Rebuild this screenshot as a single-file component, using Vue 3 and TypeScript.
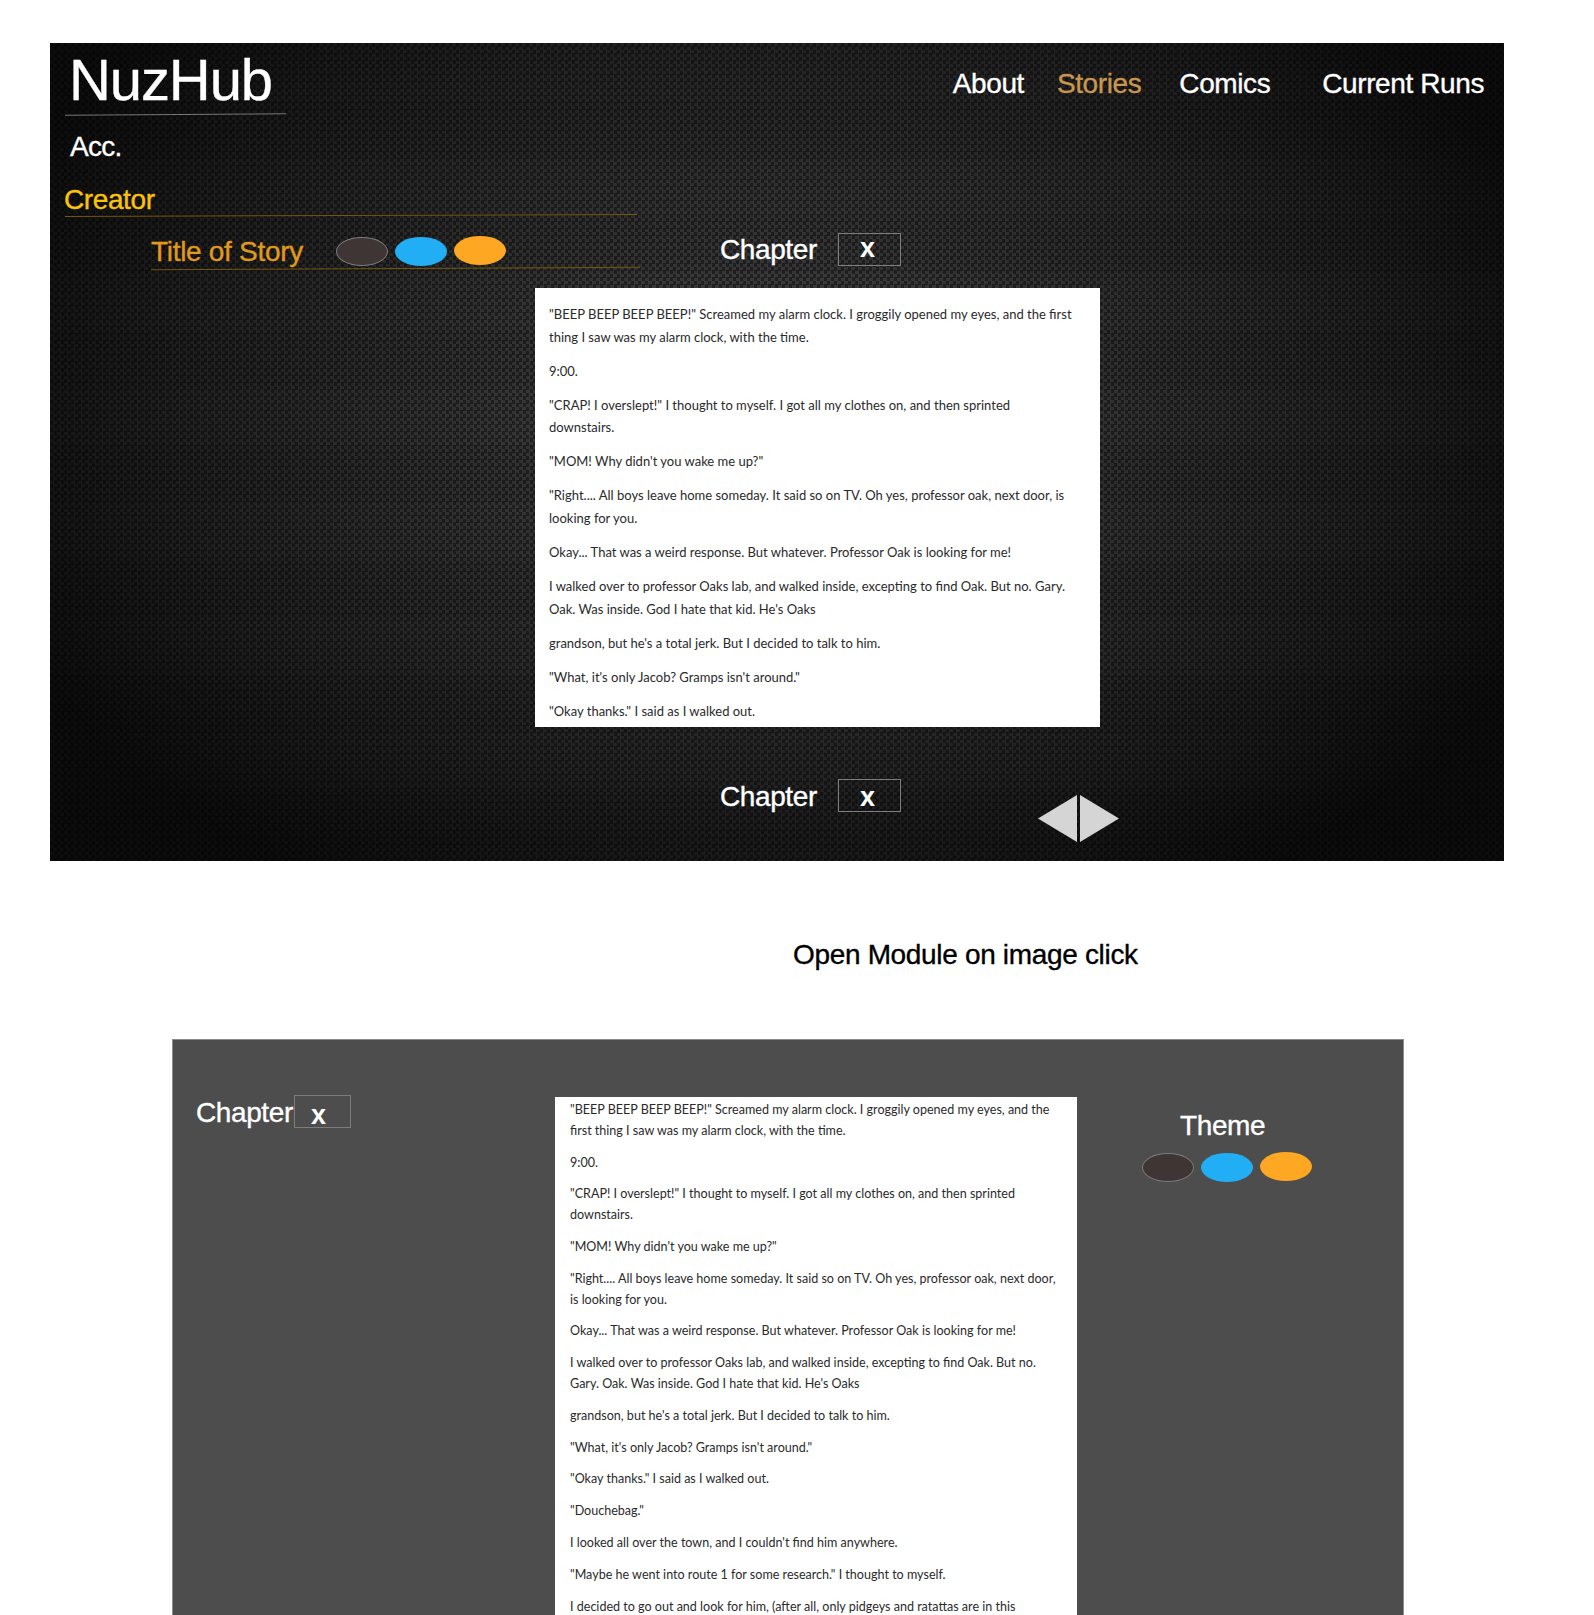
<template>
  <div class="page">
    <section class="hero">
      <div class="topbar">
        <div class="brand">
          <h1 class="logo">NuzHub</h1>
          <div class="brand-rule"></div>
        </div>
        <nav class="nav">
          <a v-for="link in links" :key="link.label" class="nav-link" :class="link.cls">{{ link.label }}</a>
        </nav>
      </div>
      <div class="acc">Acc.</div>
      <div class="creator">Creator</div>
      <div class="creator-rule"></div>

      <div class="story-row">
        <div class="story-col">
          <div class="story-head">
            <span class="story-title">Title of Story</span>
            <div class="swatches">
              <span v-for="s in swatches" :key="s" class="swatch" :class="s"></span>
            </div>
          </div>
          <div class="story-rule"></div>
        </div>
        <div class="chapter">
          <span class="chapter-label">Chapter</span>
          <span class="chapter-box">x</span>
        </div>
      </div>

      <article class="reader">
        <p v-for="(para, i) in story.slice(0, 10)" :key="i">{{ para }}</p>
      </article>

      <div class="bottom-row">
        <div class="chapter">
          <span class="chapter-label">Chapter</span>
          <span class="chapter-box low">x</span>
        </div>
        <div class="arrows">
          <svg width="39" height="47" viewBox="0 0 39 47"><polygon points="39,0 39,47 0,23.5" fill="#d5d5d5" /></svg>
          <svg width="39" height="47" viewBox="0 0 39 47"><polygon points="0,0 0,47 39,23.5" fill="#d5d5d5" /></svg>
        </div>
      </div>
    </section>

    <div class="note">Open Module on image click</div>

    <section class="module">
      <div class="module-left">
        <span class="chapter-label">Chapter</span>
        <span class="chapter-box small">x</span>
      </div>
      <article class="module-text">
        <p v-for="(para, i) in story" :key="i">{{ para }}</p>
      </article>
      <div class="module-right">
        <div class="theme">Theme</div>
        <div class="swatches">
          <span v-for="s in swatches" :key="s" class="swatch" :class="s"></span>
        </div>
      </div>
    </section>
  </div>
</template>

<script setup lang="ts">
const links = [
  { label: 'About', cls: '' },
  { label: 'Stories', cls: 'active' },
  { label: 'Comics', cls: 'comics' },
  { label: 'Current Runs', cls: 'last' }
]

const swatches = ['dark', 'blue', 'orange']

const story = [
  '"BEEP BEEP BEEP BEEP!" Screamed my alarm clock. I groggily opened my eyes, and the first thing I saw was my alarm clock, with the time.',
  '9:00.',
  '"CRAP! I overslept!" I thought to myself. I got all my clothes on, and then sprinted downstairs.',
  '"MOM! Why didn\'t you wake me up?"',
  '"Right.... All boys leave home someday. It said so on TV. Oh yes, professor oak, next door, is looking for you.',
  'Okay... That was a weird response. But whatever. Professor Oak is looking for me!',
  'I walked over to professor Oaks lab, and walked inside, excepting to find Oak. But no. Gary. Oak. Was inside. God I hate that kid. He\'s Oaks',
  'grandson, but he\'s a total jerk. But I decided to talk to him.',
  '"What, it\'s only Jacob? Gramps isn\'t around."',
  '"Okay thanks." I said as I walked out.',
  '"Douchebag."',
  'I looked all over the town, and I couldn\'t find him anywhere.',
  '"Maybe he went into route 1 for some research." I thought to myself.',
  'I decided to go out and look for him, (after all, only pidgeys and ratattas are in this'
]
</script>

<style scoped>
.page {
  height: 1615px;
  overflow: hidden;
  background: #fff;
  font-family: "Liberation Sans", Arial, sans-serif;
  font-size: 28px;
  letter-spacing: -0.4px;
  line-height: 28px;
  -webkit-text-stroke: 0.35px;
}

.hero {
  box-sizing: border-box;
  width: 1454px;
  height: 818px;
  margin: 43px 0 0 50px;
  padding-top: 8px;
  color: #fff;
  background-color: #1c1c1c;
  background-image:
    radial-gradient(ellipse 58% 68% at 50% 45%, rgba(0, 0, 0, 0) 25%, rgba(0, 0, 0, 0.42) 70%, rgba(0, 0, 0, 0.78) 100%),
    repeating-linear-gradient(180deg, rgba(255, 255, 255, 0.012) 0 57px, rgba(0, 0, 0, 0.015) 57px 115px),
    repeating-conic-gradient(#363636 0 25%, #1e1e1e 0 50%);
  background-size: auto, auto, 7px 7px;
}

.topbar {
  display: flex;
  justify-content: space-between;
  padding-right: 20px;
}

.brand {
  width: 221px;
  margin-left: 15px;
}

.logo {
  margin: 0 0 0 4px;
  font-size: 58px;
  font-weight: 400;
  line-height: 58px;
  letter-spacing: -1.1px;
}

.brand-rule {
  height: 1px;
  margin-top: 5px;
  background: #777;
  transform: rotate(-0.4deg);
}

.nav {
  display: flex;
  margin-top: 19px;
}

.nav-link {
  color: #fff;
}

.nav-link.active {
  margin-left: 33px;
  color: #c9974f;
}

.nav-link.comics {
  margin-left: 38px;
}

.nav-link.last {
  margin-left: 52px;
}

.acc {
  margin: 18px 0 0 20px;
  letter-spacing: -0.7px;
}

.creator {
  margin: 25px 0 0 14px;
  color: #fcc30b;
}

.creator-rule {
  width: 572px;
  height: 1px;
  margin: 1px 0 0 15px;
  background: #74560f;
  transform: rotate(-0.2deg);
}

.story-row {
  display: flex;
  height: 55px;
  margin-top: 17px;
}

.story-col {
  width: 489px;
  margin-left: 101px;
}

.story-head {
  display: flex;
  height: 33px;
}

.story-title {
  margin-top: 5px;
  color: #e09a1c;
  letter-spacing: -0.3px;
}

.story-rule {
  height: 1px;
  margin-top: 2px;
  background: #74560f;
  transform: rotate(-0.3deg);
}

.story-head .swatches {
  margin: 4px 0 0 33px;
}

.swatches {
  display: flex;
  gap: 7px;
}

.swatch {
  box-sizing: border-box;
  width: 52px;
  height: 29px;
  border-radius: 50%;
  border: 1px solid transparent;
}

.swatch.dark {
  background: #3f3535;
  border-color: #7b7b7b;
}

.swatch.blue {
  background: #21aef5;
}

.swatch.orange {
  margin-top: -1px;
  margin-bottom: 1px;
  background: #fda723;
}

.chapter {
  display: flex;
  align-items: flex-start;
  margin-left: 80px;
}

.chapter-label {
  margin-top: 3px;
  width: 97px;
  flex: none;
}

.chapter-box {
  box-sizing: border-box;
  width: 63px;
  height: 33px;
  margin-left: 21px;
  padding: 0 0 0 21px;
  border: 1px solid #7c7c7c;
  font-weight: 700;
  font-size: 27px;
  -webkit-text-stroke: 0;
}

.chapter-box.low {
  padding-top: 3px;
}

.reader {
  box-sizing: border-box;
  width: 565px;
  height: 439px;
  margin-left: 485px;
  padding: 15px 25px 0 14px;
  overflow: hidden;
  background: #fff;
  color: #2a2a2a;
  font-family: Lato, "Noto Sans", sans-serif;
  font-size: 13px;
  line-height: 22.7px;
  letter-spacing: 0;
  -webkit-text-stroke: 0;
}

.reader p {
  margin: 0 0 11.3px;
}

.bottom-row {
  display: flex;
  align-items: flex-start;
  margin: 52px 0 0 590px;
}

.bottom-row .chapter-label {
  margin-top: 4px;
}

.arrows {
  display: flex;
  gap: 3px;
  margin: 16px 0 0 137px;
}

.arrows svg {
  display: block;
}

.note {
  margin: 80px 0 0 793px;
  color: #000;
  height: 28px;
  letter-spacing: -0.33px;
}

.module {
  box-sizing: border-box;
  display: flex;
  width: 1232px;
  height: 600px;
  margin: 70px 0 0 172px;
  padding-top: 57px;
  border: 1px solid #8a8a8a;
  border-bottom: 0;
  background: #4d4d4d;
  color: #fff;
}

.module-left {
  display: flex;
  align-items: flex-start;
  width: 382px;
  flex: none;
  padding-left: 23px;
  box-sizing: border-box;
}

.module-left .chapter-label {
  margin-top: 2px;
  width: 98px;
}

.chapter-box.small {
  width: 57px;
  height: 33px;
  margin: -2px 0 0 0;
  padding: 5px 0 0 16px;
}

.module-text {
  box-sizing: border-box;
  width: 522px;
  flex: none;
  padding: 3px 15px 0;
  background: #fff;
  color: #2a2a2a;
  font-family: Lato, "Noto Sans", sans-serif;
  font-size: 12.55px;
  line-height: 20.8px;
  letter-spacing: 0;
  -webkit-text-stroke: 0;
}

.module-text p {
  margin: 0 0 11px;
}

.module-right {
  padding: 15px 0 0 65px;
}

.theme {
  margin-left: 38px;
  margin-bottom: 13px;
}
</style>

<style>
html, body {
  margin: 0;
}
</style>
